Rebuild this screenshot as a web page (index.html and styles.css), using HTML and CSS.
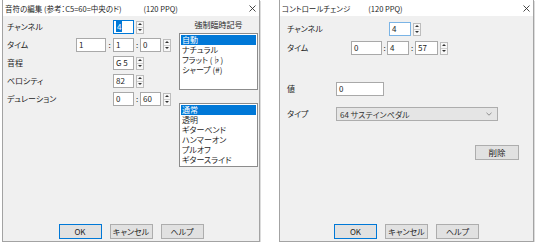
FILE: index.html
```html
<!DOCTYPE html>
<html lang="ja">
<head>
    <meta charset="UTF-8">
    <meta name="viewport" content="width=device-width, initial-scale=1.0">
    <title>音符の編集 / コントロールチェンジ</title>
    <link rel="stylesheet" href="styles.css">
</head>
<body>
    <div class="desk">

        <!-- 音符の編集 -->
        <section class="dialog note-dialog">
            <header class="titlebar">
                <span class="title">音符の編集 (参考：C5=60=中央のド)</span>
                <span class="ppq">(120 PPQ)</span>
                <svg class="close" viewBox="0 0 7 7"><path d="M0.5 0.5 L6.5 6.5 M6.5 0.5 L0.5 6.5" stroke="#333" stroke-width="0.9"/></svg>
            </header>

            <div class="dialog-body note-body">
                <div class="form note-form">
                    <div class="label">チャンネル</div>
                    <div class="spin-field col-b"><div class="box focus"><span class="sel">4</span></div><div class="spin"></div></div>

                    <div class="label">タイム</div>
                    <div class="box">1</div>
                    <div class="colon">:</div>
                    <div class="box">1</div>
                    <div class="colon">:</div>
                    <div class="box">0</div>
                    <div class="spin"></div>

                    <div class="label">音程</div>
                    <div class="spin-field col-b"><div class="box">G 5</div><div class="spin"></div></div>

                    <div class="label">ベロシティ</div>
                    <div class="spin-field col-b"><div class="box">82</div><div class="spin"></div></div>

                    <div class="label">デュレーション</div>
                    <div class="box col-b">0</div>
                    <div class="colon">:</div>
                    <div class="box">60</div>
                    <div class="spin"></div>
                </div>

                <div class="side">
                    <div class="side-label">強制臨時記号</div>
                    <ul class="listbox accidentals">
                        <li class="on">自動</li>
                        <li>ナチュラル</li>
                        <li>フラット (♭)</li>
                        <li>シャープ (#)</li>
                    </ul>
                    <ul class="listbox techniques">
                        <li class="on">通常</li>
                        <li>透明</li>
                        <li>ギターベンド</li>
                        <li>ハンマーオン</li>
                        <li>プルオフ</li>
                        <li>ギタースライド</li>
                    </ul>
                </div>
            </div>

            <footer class="buttons">
                <button class="btn default">OK</button>
                <button class="btn">キャンセル</button>
                <button class="btn">ヘルプ</button>
            </footer>
        </section>

        <!-- コントロールチェンジ -->
        <section class="dialog cc-dialog">
            <header class="titlebar">
                <span class="title">コントロールチェンジ</span>
                <span class="ppq">(120 PPQ)</span>
                <svg class="close" viewBox="0 0 7 7"><path d="M0.5 0.5 L6.5 6.5 M6.5 0.5 L0.5 6.5" stroke="#333" stroke-width="0.9"/></svg>
            </header>

            <div class="dialog-body cc-body">
                <div class="form cc-form">
                    <div class="label">チャンネル</div>
                    <div class="spin-field col-b"><div class="box focus soft">4</div><div class="spin"></div></div>

                    <div class="label">タイム</div>
                    <div class="box">0</div>
                    <div class="colon">:</div>
                    <div class="box">4</div>
                    <div class="colon">:</div>
                    <div class="box">57</div>
                    <div class="spin"></div>
                </div>

                <div class="row value-row">
                    <div class="label">値</div>
                    <div class="box value">0</div>
                </div>

                <div class="row type-row">
                    <div class="label">タイプ</div>
                    <div class="combo">
                        <span>64 サステインペダル</span>
                        <svg class="chevron" viewBox="0 0 6 4"><path d="M0.5 0.8 L3 3.2 L5.5 0.8" fill="none" stroke="#777" stroke-width="0.8"/></svg>
                    </div>
                </div>

                <div class="row delete-row">
                    <button class="btn">削除</button>
                </div>
            </div>

            <footer class="buttons">
                <button class="btn default">OK</button>
                <button class="btn">キャンセル</button>
                <button class="btn">ヘルプ</button>
            </footer>
        </section>

    </div>
</body>
</html>
```

FILE: styles.css
```css
* {
    box-sizing: border-box;
}
body {
    margin: 0;
    background: #fff;
    font-family: "Noto Sans CJK JP", "Noto Sans", sans-serif;
    font-size: 8px;
    font-feature-settings: "palt";
    color: #1e1e1e;
}
.desk {
    display: flex;
    gap: 19px;
    padding-left: 2px;
}

/* dialog frame */
.dialog {
    display: flex;
    flex-direction: column;
    height: 242px;
    background: #f0f0f0;
    border: 1px solid #a3a3a3;
    border-top: 0;
    box-shadow: 1px 1px 0 #dcdcdc;
}
.note-dialog {
    width: 258px;
}
.cc-dialog {
    width: 255px;
}
.titlebar {
    display: flex;
    align-items: center;
    height: 16px;
    padding: 0 3px 0 2px;
    background: #fff;
    font-size: 7.5px;
    white-space: nowrap;
}
.titlebar .ppq {
    margin-left: 22px;
}
.cc-dialog .titlebar .ppq {
    margin-left: 18px;
}
.close {
    width: 7px;
    height: 7px;
    margin-left: auto;
}
.dialog-body {
    flex: 1;
}

/* inputs */
.box {
    height: 14px;
    padding: 0 2px;
    background: #fff;
    border: 1px solid #a9a9a9;
    line-height: 12px;
    white-space: nowrap;
}
.box.focus {
    border-color: #0078d7;
}
.box.soft {
    border-color: #7ab4e6;
}
.sel {
    padding: 0 1px;
    background: #0078d7;
    color: #fff;
}
.colon {
    text-align: center;
    line-height: 14px;
}
.spin {
    display: flex;
    flex-direction: column;
    align-items: center;
    justify-content: space-around;
    width: 8px;
    height: 13px;
    margin-left: 2px;
    border: 1px solid #bdbdbd;
    background: linear-gradient(to bottom, transparent 5px, #cfcfcf 5px, #cfcfcf 6px, transparent 6px), #f7f7f7;
}
.spin::before {
    content: "";
    border-left: 2px solid transparent;
    border-right: 2px solid transparent;
    border-bottom: 2px solid #333;
}
.spin::after {
    content: "";
    border-left: 2px solid transparent;
    border-right: 2px solid transparent;
    border-top: 2px solid #333;
}
.spin-field {
    display: flex;
    align-items: center;
}
.spin-field .box {
    width: 21px;
}
.label {
    line-height: 14px;
    white-space: nowrap;
}

/* 音符の編集 */
.note-body {
    display: flex;
    padding: 4px 1px 0 4px;
}
.form {
    display: grid;
    grid-auto-rows: 14px;
    align-items: center;
}
.note-form {
    grid-template-columns: 69px 30px 7px 21px 6px 21px 9px;
    row-gap: 4px;
    align-self: flex-start;
}
.col-b {
    grid-column: 4 / span 4;
}
.box.col-b {
    grid-column: 4;
}
.side {
    width: 79px;
    margin-left: auto;
}
.side-label {
    height: 10px;
    line-height: 10px;
    text-align: center;
}
.listbox {
    margin: 0;
    padding: 1px;
    list-style: none;
    background: #fff;
    border: 1px solid #8c8c8c;
}
.listbox li {
    height: 10px;
    padding-left: 1px;
    line-height: 10px;
    white-space: nowrap;
}
.listbox li.on {
    background: #0078d7;
    color: #fff;
}
.accidentals {
    height: 57px;
    margin-top: 3px;
}
.techniques {
    height: 64px;
    margin-top: 13px;
}

/* buttons */
.btn {
    width: 43px;
    height: 15px;
    padding: 0;
    background: #e1e1e1;
    border: 1px solid #adadad;
    font: inherit;
    line-height: 13px;
    color: #1e1e1e;
}
.btn.default {
    border-color: #0078d7;
}
.buttons {
    display: flex;
    justify-content: center;
    gap: 8px;
    padding-bottom: 2px;
}

/* コントロールチェンジ */
.cc-body {
    padding: 6px 14px 0 7px;
}
.cc-form {
    grid-template-columns: 64px 31px 5px 22px 6px 23px 9px;
    row-gap: 5px;
}
.cc-form .spin-field .box {
    width: 22px;
    margin-left: 2px;
}
.row {
    display: flex;
    align-items: center;
}
.row .label {
    width: 49px;
}
.value-row {
    margin-top: 27px;
}
.box.value {
    width: 48px;
}
.type-row {
    margin-top: 11px;
}
.combo {
    display: flex;
    align-items: center;
    width: 162px;
    height: 14px;
    padding: 0 5px 0 3px;
    background: #e5e5e5;
    border: 1px solid #adadad;
    color: #333;
    white-space: nowrap;
}
.chevron {
    width: 6px;
    height: 4px;
    margin-left: auto;
}
.delete-row {
    justify-content: flex-end;
    margin-top: 24px;
}
.delete-row .btn {
    width: 44px;
    font-size: 8.5px;
}
```
